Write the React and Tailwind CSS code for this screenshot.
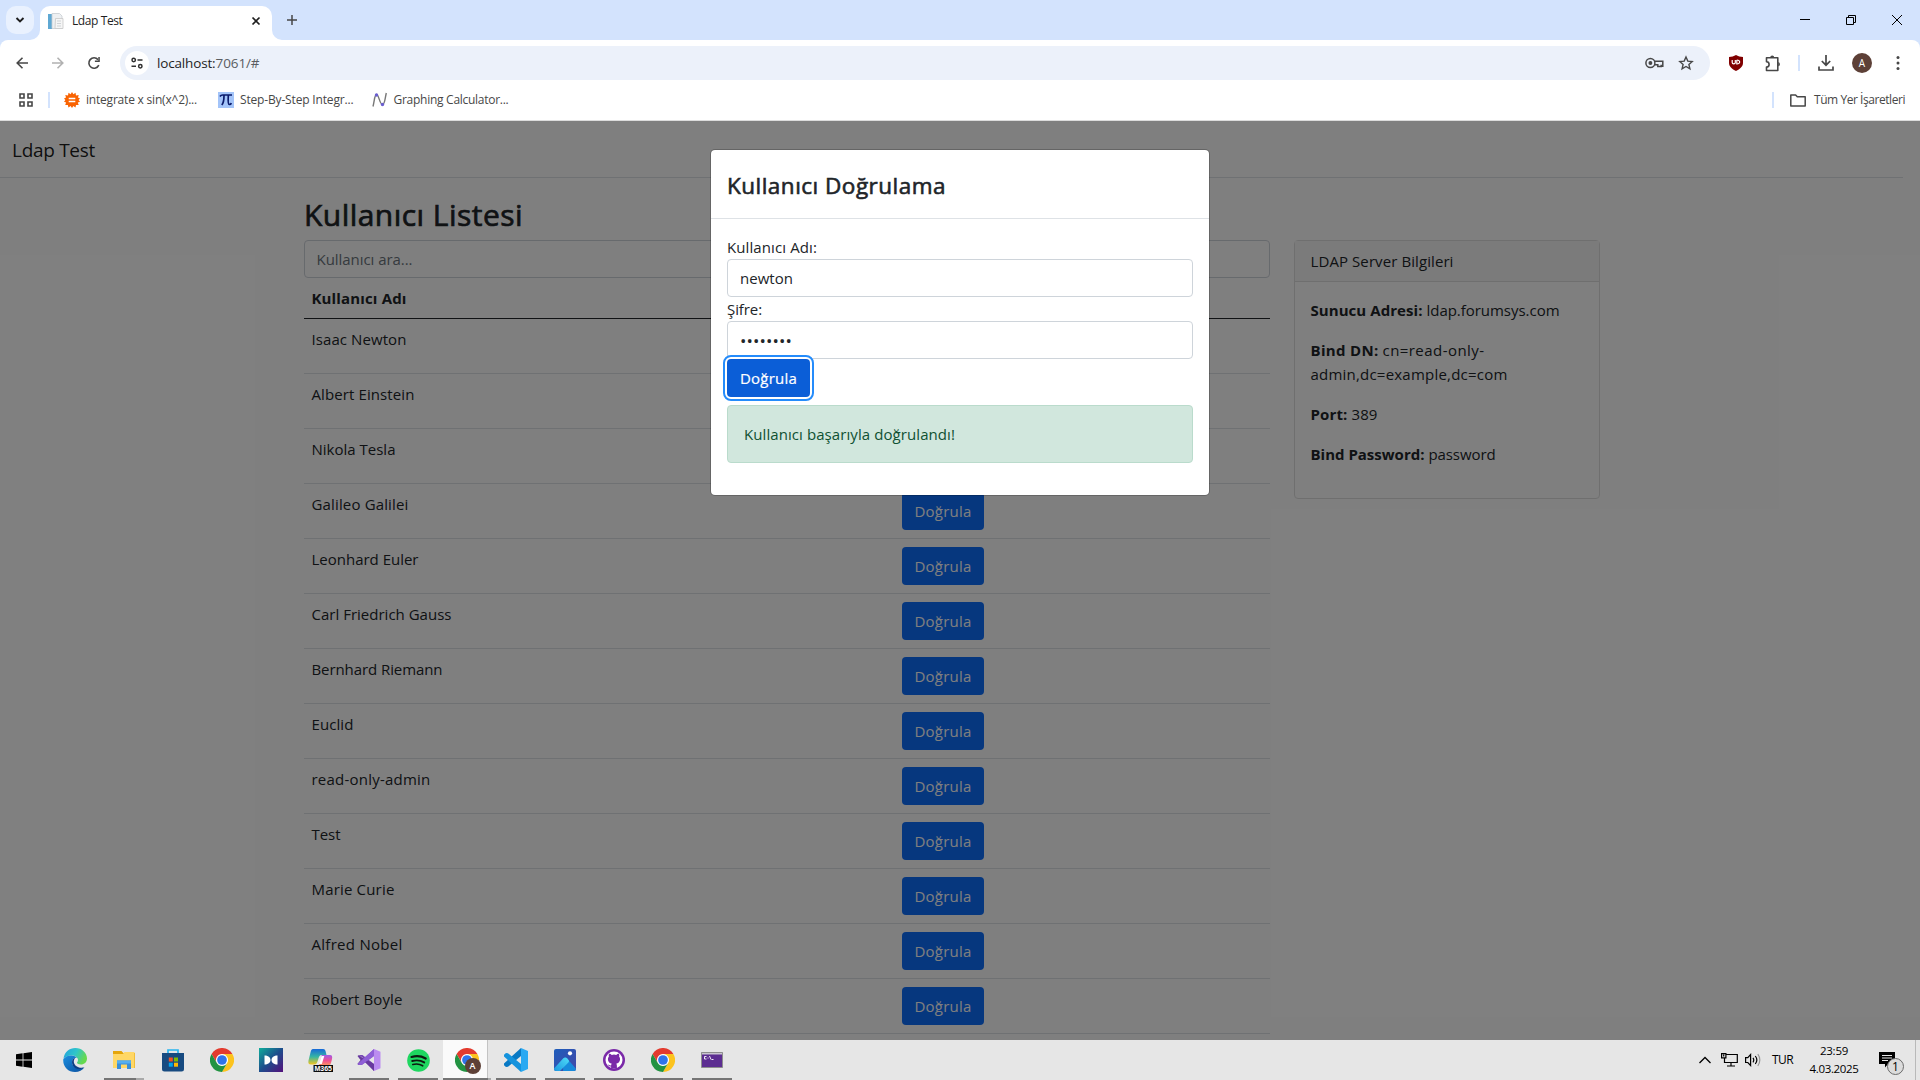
import { useLayoutEffect, useRef, useState } from "react";

/* Text whose tracking is adjusted so that it spans `w` pixels. */
function Fit({ w, className = "", children }) {
  const ref = useRef(null);
  const [spacing, setSpacing] = useState(0);
  useLayoutEffect(() => {
    const natural = ref.current.getBoundingClientRect().width;
    setSpacing((w - natural) / Array.from(String(children)).length);
  }, [w, children]);
  return (
    <span ref={ref} className={`inline-block whitespace-nowrap ${className}`} style={{ letterSpacing: `${spacing}px` }}>
      {children}
    </span>
  );
}

const USERS = [
  ["Isaac Newton", 95],
  ["Albert Einstein", 103],
  ["Nikola Tesla", 84],
  ["Galileo Galilei", 97],
  ["Leonhard Euler", 107],
  ["Carl Friedrich Gauss", 140],
  ["Bernhard Riemann", 131],
  ["Euclid", 42],
  ["read-only-admin", 119],
  ["Test", 29],
  ["Marie Curie", 83],
  ["Alfred Nobel", 91],
  ["Robert Boyle", 91],
];

function TabStrip() {
  return (
    <div className="flex h-10 items-end bg-[#d3e3fd] *:shrink-0">
      <div className="mb-[6px] ml-[6px] flex h-7 w-7 items-center justify-center rounded-[10px] bg-[#e9f1fe]">
        <svg width="10" height="8" viewBox="0 0 10 8" fill="none" stroke="#1f1f1f" strokeWidth="1.9"><path d="M1.5 2 5 5.5 8.5 2" /></svg>
      </div>
      <svg className="ml-[-4px]" width="10" height="10" viewBox="0 0 10 10"><path d="M10 0v10H0A10 10 0 0 0 10 0" fill="#fff" /></svg>
      <div className="flex h-[34px] w-[232px] items-center rounded-t-[10px] bg-white pr-[11px] pb-[5px] pl-2 text-[12px] text-[#1f1f1f]">
        <svg width="16" height="16" viewBox="0 0 16 16">
          <path d="M0 1h4v15H0z" fill="#5fa8d3" />
          <path d="M4 .5h7.5L14 3v12.500H4z" fill="#eef0f2" stroke="#c8cdd2" strokeWidth=".8" />
          <path d="M7.500 5.500h7.500v10H7z" fill="#f6f6f6" stroke="#c8c8c8" strokeWidth=".8" />
          <path d="M9 8h4M9 10.500h4M9 13h4" stroke="#cfd3d6" />
        </svg>
        <Fit w={50.500} className="ml-2">Ldap Test</Fit>
        <svg className="ml-auto" width="10" height="10" viewBox="0 0 10 10" stroke="#1f1f1f" strokeWidth="1.700"><path d="m1.500 1.500 7 7m0-7-7 7" /></svg>
      </div>
      <svg width="10" height="10" viewBox="0 0 10 10"><path d="M0 0v10h10A10 10 0 0 1 0 0" fill="#fff" /></svg>
      <svg className="mb-[15px] ml-[5px]" width="10" height="10" viewBox="0 0 10 10" stroke="#474747" strokeWidth="1.500"><path d="M5 0v10M0 5h10" /></svg>
      <div className="mb-[14px] ml-auto flex items-center pr-[17px]">
        <svg width="10" height="12" viewBox="0 0 10 12" stroke="#000"><path d="M0 5.500h10" /></svg>
        <svg className="ml-9" width="10" height="12" viewBox="0 0 10 12" fill="none" stroke="#000"><path d="M.5 3.500h7v7h-7zM2.500 3.500v-2h7v7h-2" /></svg>
        <svg className="ml-[35px]" width="12" height="12" viewBox="0 0 12 12" stroke="#000"><path d="m1 1 10 10M11 1 1 11" /></svg>
      </div>
    </div>
  );
}

function Toolbar() {
  return (
    <div className="bg-[#d3e3fd]">
      <div className="flex h-10 items-center rounded-t-[8px] bg-white pt-[6px] pr-4 pl-4 text-[#474747] *:shrink-0">
        <svg width="12" height="12" viewBox="0 0 12 12" fill="none" stroke="#474747" strokeWidth="1.600"><path d="M12 6H1.200M6.500.7 1.200 6l5.300 5.300" /></svg>
        <svg className="ml-6" width="12" height="12" viewBox="0 0 12 12" fill="none" stroke="#b1b1b1" strokeWidth="1.600"><path d="M0 6h10.800M5.500.7 10.800 6l-5.300 5.300" /></svg>
        <svg className="ml-[23px]" width="14" height="14" viewBox="0 0 14 14"><path d="M11.800 9.200A5.200 5.200 0 1 1 11 3.600" fill="none" stroke="#474747" strokeWidth="1.600" /><path d="M12.800 1v4.900H7.900V4.500h3.400V1z" fill="#474747" /></svg>
        <div className="ml-[19px] flex h-[34px] w-[1590px] items-center rounded-full bg-[#ecf1fa] pr-4 pl-[5px]">
          <div className="flex size-6 items-center justify-center rounded-full bg-white">
            <svg width="12" height="12" viewBox="0 0 12 12" fill="none" stroke="#303030" strokeWidth="1.500"><circle cx="2.700" cy="3" r="1.700" /><path d="M6.500 3h5M.5 9.300h4.500" /><circle cx="9.300" cy="9.300" r="1.700" /></svg>
          </div>
          <div className="ml-2 text-[13.500px] leading-5 text-[#1f1f1f]">
            <Fit w={58.500}>localhost:</Fit><Fit w={44} className="text-[#5a5d61]">7061/#</Fit>
          </div>
          <svg className="mr-[-1px] ml-auto" width="19" height="12" viewBox="0 0 19 12" fill="none" stroke="#474747" strokeWidth="1.500"><path d="M9.600 4.200h8.200v5h-1.600M9.600 7.700h3.200v1.800h3.400V7.700" /><circle cx="5.400" cy="6" r="4.500" /><circle cx="5.400" cy="6" r="1.200" fill="#474747" /></svg>
          <svg className="ml-[15px]" width="16" height="16" viewBox="0 0 16 16" fill="none" stroke="#474747" strokeWidth="1.400"><path d="m8 2 1.800 4.100 4.400.4-3.300 3 1 4.300L8 11.500l-3.900 2.300 1-4.300-3.300-3 4.400-.4z" /></svg>
        </div>
        <svg className="ml-[19px]" width="14" height="16" viewBox="0 0 14 16"><path d="M7 0c2 1.300 4.500 2 7 2v6c0 3.500-3 6-7 8-4-2-7-4.500-7-8V2c2.500 0 5-.7 7-2" fill="#800000" /><path d="M3.200 5v2.600c0 1.800 3.100 1.800 3.100 0V5M7.800 5v3.900c3.800.2 3.800-4 0-3.900" fill="none" stroke="#fff" strokeWidth="1.200" /></svg>
        <svg className="ml-[21px]" width="18" height="17" viewBox="0 0 18 17"><path d="M2.500 2.800h11.300v12.700H2.500V12a2.600 2.600 0 0 0 0-5.200z" fill="none" stroke="#474747" strokeWidth="1.600" strokeLinejoin="round" /><path d="M6.200 2.500a2 2 0 0 1 4 0zM14.200 7a2.200 2.200 0 0 1 0 4.300z" fill="#474747" /></svg>
        <span className="ml-4 h-4 w-[2px] bg-[#d3e3fd]" />
        <svg className="ml-[18px]" width="16" height="16" viewBox="0 0 16 16" fill="none" stroke="#474747" strokeWidth="1.700"><path d="M8 0v10M3.800 6 8 10.200 12.200 6M1 11.500V15h14v-3.500" /></svg>
        <span className="ml-[18px] flex size-5 items-center justify-center rounded-full bg-[#5d4037] text-[10px] leading-none text-white">A</span>
        <svg className="ml-6" width="4" height="16" viewBox="0 0 4 16" fill="#474747"><circle cx="2" cy="2.500" r="1.500" /><circle cx="2" cy="8" r="1.500" /><circle cx="2" cy="13.500" r="1.500" /></svg>
      </div>
    </div>
  );
}

function Bookmarks() {
  return (
    <div className="flex h-[41px] items-center border-b border-[#dcdcdc] bg-white pr-[15px] pl-[19px] text-[12px] text-[#474747]">
      <svg width="14" height="14" viewBox="0 0 14 14" fill="none" stroke="#474747" strokeWidth="1.600"><path d="M1 1h4v4H1zM9 1h4v4H9zM1 9h4v4H1zM9 9h4v4H9z" /></svg>
      <span className="ml-[15px] h-4 w-[2px] bg-[#d3e3fd]" />
      <svg className="ml-[14px]" width="16" height="16" viewBox="0 0 16 16">
        <path d="m8 0 1.400 2.200L11.500.8l.5 2.600 2.700-.3-.7 2.500 2 .9L14.500 8l1.500 1.700-2.200.9.900 2.500-2.700-.2-.5 2.500-2.200-1.500L8 16l-1.400-2.100-2.200 1.500-.5-2.500-2.700.2.900-2.500L0 9.700 1.400 8 0 6.500l2-.9-.7-2.500 2.700.3.500-2.600 2.100 1.400z" fill="#f96302" />
        <path d="M4.700 6.500h6.600M4.700 9.400h6.600" stroke="#fff" strokeWidth="1.500" />
      </svg>
      <Fit w={111} className="ml-[6px]">integrate x sin(x^2)...</Fit>
      <svg className="ml-[21px]" width="16" height="16" viewBox="0 0 16 16"><path d="M0 0h16v16H0z" fill="#a3c4f9" /><path d="M2 4.500C3 2.800 4 3 5 3h9M6 3.500C6 8 5.500 11 3.800 13M10.300 3.500c-.3 5-.5 8.800 1 9 1 .1 1.700-.6 1.900-1.500" fill="none" stroke="#0a1a6b" strokeWidth="1.700" /></svg>
      <Fit w={113.500} className="ml-[6px]">Step-By-Step Integr...</Fit>
      <svg className="ml-[18px]" width="16" height="16" viewBox="0 0 16 16" fill="none"><path d="M1 14.500C2.500 9 2.500 2.500 4.500 2.500c2.500 0 3 10 6 10C13 12.500 13 6 14.300 1" stroke="#777" strokeWidth="1.400" /><circle cx="4.500" cy="3" r="1.700" fill="#6a5ed0" /><circle cx="10.500" cy="12.500" r="1.700" fill="#6a5ed0" /></svg>
      <Fit w={115} className="ml-[6px]">Graphing Calculator...</Fit>
      <span className="ml-auto h-4 w-[2px] bg-[#d3e3fd]" />
      <svg className="ml-4" width="16" height="13" viewBox="0 0 16 13" fill="none" stroke="#474747" strokeWidth="1.500"><path d="M.8.900h4.800l1.700 1.900h7.900v9.300H.8z" strokeLinejoin="round" /></svg>
      <Fit w={91} className="ml-2">Tüm Yer İşaretleri</Fit>
    </div>
  );
}

function Info({ label, lw, value, vw }) {
  return (
    <p className="flex">
      <Fit w={lw} className="font-bold">{label}</Fit>
      <Fit w={vw} className="ml-1">{value}</Fit>
    </p>
  );
}

function Page() {
  return (
    <div className="h-full bg-white text-[15px] leading-6 text-[#212529]">
      <nav className="mr-[17px] flex h-[57px] items-center border-b border-[#dee2e6] pt-px pl-3">
        <Fit w={83} className="text-[19px] text-black/90">Ldap Test</Fit>
      </nav>
      <div className="flex px-[304px] pt-4">
        <main className="w-[966px]">
          <h2 className="mb-2 h-[38px] pt-[2px] text-[30px] leading-[38px] [-webkit-text-stroke:0.7px]"><Fit w={219}>Kullanıcı Listesi</Fit></h2>
          <div className="h-[38px] rounded border border-[#ced4da] px-[11.500px] py-[6px] text-[#6c757d]"><Fit w={96}>Kullanıcı ara...</Fit></div>
          <div className="h-[41px] border-b border-[#212529] px-[7.500px] py-2 font-bold"><Fit w={95}>Kullanıcı Adı</Fit></div>
          {USERS.map(([name, w]) => (
            <div key={name} className="grid h-[55px] grid-cols-[590px_1fr] border-b border-[#dee2e6] pt-2">
              <div className="pl-[7.500px]"><Fit w={w}>{name}</Fit></div>
              <div className="pl-2">
                <button className="block h-[38px] w-[82px] rounded bg-[#0d6efd] text-white"><Fit w={57}>Doğrula</Fit></button>
              </div>
            </div>
          ))}
        </main>
        <aside className="mt-[46px] ml-6 h-[259px] w-[306px] shrink-0 rounded border border-[#dfdfdf]">
          <div className="h-[41px] border-b border-[#dfdfdf] bg-[#f7f7f7] px-[15.500px] py-2"><Fit w={143}>LDAP Server Bilgileri</Fit></div>
          <div className="flex flex-col gap-4 px-[15.500px] py-4">
            <Info label="Sunucu Adresi:" lw={112} value="ldap.forumsys.com" vw={133} />
            <div>
              <Info label="Bind DN:" lw={68} value="cn=read-only-" vw={102} />
              <Fit w={197}>admin,dc=example,dc=com</Fit>
            </div>
            <Info label="Port:" lw={37} value="389" vw={26} />
            <Info label="Bind Password:" lw={114} value="password" vw={67} />
          </div>
        </aside>
      </div>
    </div>
  );
}

function Modal() {
  return (
    <div className="h-[347px] w-[500px] rounded-[5px] border border-black/20 bg-white bg-clip-padding text-[15px] leading-6 text-[#212529]">
      <div className="h-[69px] border-b border-[#dee2e6] px-4 pt-[18px] text-[22.500px] leading-9 [-webkit-text-stroke:0.600px]"><Fit w={219}>Kullanıcı Doğrulama</Fit></div>
      <div className="p-4">
        <div className="h-6"><Fit w={90}>Kullanıcı Adı:</Fit></div>
        <div className="h-[38px] rounded border border-[#ced4da] px-3 py-[6px]"><Fit w={53}>newton</Fit></div>
        <div className="h-6"><Fit w={35}>Şifre:</Fit></div>
        <div className="h-[38px] rounded border border-[#ced4da] px-3 py-[7px] text-[17px]"><Fit w={52}>••••••••</Fit></div>
        <button className="block h-[38px] w-[83px] rounded bg-[#0b5ed7] text-white outline-2 outline-offset-2 outline-[#258cfb] ring-2 ring-white [-webkit-text-stroke:0.200px]"><Fit w={57}>Doğrula</Fit></button>
        <div className="mt-2 h-[58px] rounded border border-[#badbcc] bg-[#d1e7dd] px-4 py-4 text-[#0f5132]"><Fit w={211}>Kullanıcı başarıyla doğrulandı!</Fit></div>
      </div>
    </div>
  );
}

function ChromeIcon() {
  return (
    <svg width="24" height="24" viewBox="0 0 48 48">
      <circle cx="24" cy="24" r="13" fill="#fff" />
      <path d="M3.200 12A24 24 0 0 1 44.800 12H24A12 12 0 0 0 13.600 30z" fill="#e33b2e" />
      <path d="M44.800 12A24 24 0 0 1 24 48L34.400 30A12 12 0 0 0 24 12z" fill="#fcc31e" />
      <path d="M24 48A24 24 0 0 1 3.200 12L13.600 30A12 12 0 0 0 34.400 30z" fill="#229342" />
      <circle cx="24" cy="24" r="9.700" fill="#2f74ea" />
    </svg>
  );
}

function EdgeIcon() {
  return (
    <svg width="24" height="24" viewBox="0 0 24 24">
      <defs>
        <linearGradient id="edgeTop" x1="0" y1="0" x2="1" y2=".4"><stop stopColor="#1f9fe0" /><stop offset=".55" stopColor="#2fc6c9" /><stop offset="1" stopColor="#66d94f" /></linearGradient>
        <linearGradient id="edgeLow" x1="0" y1="0" x2="1" y2="1"><stop stopColor="#1b8fe0" /><stop offset="1" stopColor="#0b4f9e" /></linearGradient>
      </defs>
      <path d="M.5 10.500C1.500 4 6.500 0 12.300 0 19 0 24 5 24 10.500c0 3.700-2.800 6-6 6-2.600 0-4-.9-4-1.700 0-.7 1-1 1-3C15 9.500 12 7.500 8.500 7.500 5 7.500 2 9 .5 10.500" fill="url(#edgeTop)" />
      <path d="M.3 11C2.500 8.500 5 7.500 8.500 7.500c2.500 0 4.500 1 5.500 2.300-3-.5-5 1.700-5 4.200 0 3.800 3.500 6.600 7.500 6.600 2.200 0 4-.8 5-1.300C19.500 22.300 16 24 12 24 5 24-.5 18.300.3 11" fill="url(#edgeLow)" />
      <path d="M9 14c0-2.200 1.300-3.800 3.300-4.200C10 12 9.800 17.500 16 19.500c2 .6 4.300 0 5.500-.2-1 .8-3 1.800-5.500 1.800-4 0-7-3.200-7-7.100" fill="#0d3f86" />
    </svg>
  );
}

const ICONS = {
  edge: <EdgeIcon />,
  explorer: (
    <svg width="22" height="20" viewBox="0 0 22 20"><path d="M0 1h8.500l1.800 2H22v15H0z" fill="#e5a50b" /><path d="M0 4h10l1.500-2H21.500v16H0z" fill="#ffd766" /><path d="M4 19v-8.500h14V19h-4v-4.500H8V19z" fill="#3a8fd9" /><path d="M4 10.500h14v3H4z" fill="#55aef0" /></svg>
  ),
  store: (
    <svg width="24" height="24" viewBox="0 0 24 24"><path d="M7 6V2h10v4" fill="none" stroke="#29b5f0" strokeWidth="1.700" /><path d="M1 5h22v16a2.500 2.500 0 0 1-2.500 2.500h-17A2.500 2.500 0 0 1 1 21z" fill="#174a80" /><path d="M7.800 9.500h4v4h-4z" fill="#f25022" /><path d="M13 9.500h4v4h-4z" fill="#7fba00" /><path d="M7.800 14.700h4v4h-4z" fill="#00a4ef" /><path d="M13 14.700h4v4h-4z" fill="#ffb900" /></svg>
  ),
  chrome: <ChromeIcon />,
  bow: (
    <svg width="24" height="24" viewBox="0 0 24 24"><defs><linearGradient id="bow" x1="0" y1="0" x2="1" y2="1"><stop stopColor="#0fae9b" /><stop offset=".5" stopColor="#1d4d8c" /><stop offset="1" stopColor="#55107c" /></linearGradient></defs><path d="M0 0h24v24H0z" fill="url(#bow)" /><path d="M5.500 7.500C10 7.500 11.500 10 11.500 12S10 16.500 5.500 16.500zM18.500 7.500C14 7.500 12.500 10 12.500 12s1.500 4.500 6 4.500z" fill="#fff" /></svg>
  ),
  m365: (
    <svg width="25" height="24" viewBox="0 0 25 24">
      <defs><linearGradient id="mA" x1="0" y1="0" x2="0" y2="1"><stop stopColor="#1668d8" /><stop offset=".5" stopColor="#35b6a4" /><stop offset="1" stopColor="#f4c51c" /></linearGradient><linearGradient id="mB" x1="0" y1="0" x2="0" y2="1"><stop stopColor="#a05be8" /><stop offset=".5" stopColor="#ee4f91" /><stop offset="1" stopColor="#ff9a5a" /></linearGradient></defs>
      <path d="M5 1h10c2 0 2.500 1.500 3 4l.5 2h-5c-2 0-2.500 1.500-3.500 5-1 3-1.500 4.500-4 4.500H3c-2.500 0-3-1.500-2.500-4l2-8C3 2.500 3.500 1 5 1" fill="url(#mA)" />
      <path d="M14 7h8c2 0 2.600 1.500 2 4l-1 4c-.6 2-1.500 3-3.500 3H9c2 0 2.500-2 3-4l1-4c.4-2 .6-3 1-3" fill="url(#mB)" />
      <path d="M13.500 8h2.800l-2.500 8H11z" fill="#fff" />
      <path d="M5.500 17H25v7H5.500z" fill="#0b0b0b" />
      <text x="6.500" y="23" fontSize="7" fontWeight="700" fill="#fff" textLength="17.500" fontFamily="Liberation Sans, sans-serif">M365</text>
    </svg>
  ),
  vs: (
    <svg width="24" height="24" viewBox="0 0 24 24"><path d="m17 1 6.500 2.800v16.400L17 23z" fill="#bb8cf0" /><path d="M.5 8 2 7l3.500 2.500L17 23V16L5.500 7 2 7z" fill="#7544b5" /><path d="M17 1v7L5 17l-3 0-1.500-1z" fill="#8a5bd0" /><path d="M.5 8 2 7l3 2.500L17 16v7L7.500 13.800 2 17l-1.500-1 3-4z" fill="#68399f" /><path d="M17 1v7L5.500 16.200 2 17 .5 16z" fill="#8f5fd6" /><path d="M.500 9.500v5L3.200 12z" fill="#e6e6e6" /></svg>
  ),
  spotify: (
    <svg width="23" height="23" viewBox="0 0 23 23" fill="none" stroke="#0c1a10" strokeLinecap="round"><circle cx="11.500" cy="11.500" r="11.300" fill="#1ed760" stroke="none" /><path d="M4.500 8c5-1.400 10-.9 14.200 1.500" strokeWidth="2.200" /><path d="M5.200 12c4.300-1.200 8.500-.7 12 1.400" strokeWidth="1.900" /><path d="M5.800 15.500c3.500-.9 7-.5 9.900 1.300" strokeWidth="1.600" /></svg>
  ),
  chromeA: (
    <div className="relative ml-[3px]">
      <ChromeIcon />
      <span className="absolute top-[10px] left-[10px] flex size-4 items-center justify-center rounded-full bg-[#5d4037] text-[9px] font-semibold text-white">A</span>
    </div>
  ),
  vscode: (
    <svg width="24" height="24" viewBox="0 0 24 24"><path d="M17 0 0 15.500v1.800L2 19l2-.3L17 8z" fill="#0879c4" /><path d="M17 24 0 8.500V6.700L2 5l2 .3L17 16z" fill="#1593dd" /><path d="m17 0 7 3v18l-7 3z" fill="#2aa9f2" /></svg>
  ),
  photos: (
    <svg width="22" height="22" viewBox="0 0 22 22">
      <defs>
        <linearGradient id="ph" x1="0" y1="0" x2="1" y2="1"><stop stopColor="#1e5dbb" /><stop offset="1" stopColor="#4348a8" /></linearGradient>
        <linearGradient id="ph2" x1="0" y1="1" x2="1" y2="0"><stop stopColor="#1a95e0" /><stop offset="1" stopColor="#4fdcf7" /></linearGradient>
        <clipPath id="phc"><rect width="22" height="22" rx="2" /></clipPath>
      </defs>
      <g clipPath="url(#phc)">
        <path d="M0 0h22v22H0z" fill="url(#ph)" />
        <path d="M9.500 9.500c1-1.200 2.500-1.200 3.600 0L24 22H9z" fill="#178adb" />
        <path d="M-1 20.500 9.300 9.300c1-1.100 2.600-1.200 3.600-.2l1.500 1.600c.8.900.8 1.900 0 2.700L6 22h-7z" fill="url(#ph2)" />
        <circle cx="16" cy="4.300" r="2.100" fill="#fff" />
      </g>
    </svg>
  ),
  github: (
    <svg width="22" height="22" viewBox="0 0 22 22"><circle cx="11" cy="11" r="11" fill="#7a29a8" /><circle cx="11" cy="11" r="8.500" fill="#fff" /><path d="M6 4.800c1.200 0 2 .5 2.800 1.100a9 9 0 0 1 4.400 0c.8-.6 1.600-1.100 2.800-1.100.4 1 .4 2 .1 2.800 2 2.500.8 6.700-2.900 7.100.6.600.7 1.500.7 2.400V19a8.500 8.500 0 0 1-5.800 0v-1.500c-2 .4-2.600-1-3.400-1.900 1.200-.2 1.700 1.200 3.400.8 0-.7.200-1.300.7-1.700-3.700-.4-4.900-4.600-2.900-7.100C5.600 6.800 5.600 5.800 6 4.800" fill="#7a29a8" /></svg>
  ),
  terminal: (
    <svg className="mt-[-1px]" width="22" height="16" viewBox="0 0 22 16"><path d="M.5.500h21v15H.5z" fill="#5c2d91" stroke="#8d8d8d" /><path d="M1 1h20v1.500H1z" fill="#c9c4cf" /><path d="M5.500 4.500H3.500v2.500h2M7 5v.5M7 6.500V7M8.500 4l1.500 3.500M10.500 7.500h2" stroke="#fff" fill="none" strokeWidth=".9" /></svg>
  ),
};

const TASKS = [
  ["edge", 0], ["explorer", 2], ["store", 0], ["chrome", 0], ["bow", 0], ["m365", 0], ["vs", 1],
  ["spotify", 1], ["chromeA", 3], ["vscode", 1], ["photos", 1], ["github", 1], ["chrome", 1], ["terminal", 1],
];

function Task({ icon, state }) {
  return (
    <div className="flex h-10 w-[49px] flex-col">
      <div className={`flex h-[38px] items-center justify-center pt-[2px] ${state === 3 ? "mr-[3px] ml-px border-r border-[#c4c4c4] bg-[#fafafa]" : "pl-px"}`}>{ICONS[icon]}</div>
      {state === 1 && <div className="mr-1 ml-[5px] h-[2px] bg-[#757575]" />}
      {state === 2 && <div className="ml-[5px] flex h-[2px] w-10"><div className="w-8 bg-[#757575]" /><div className="w-2 bg-[#a9a9a9]" /></div>}
      {state === 3 && <div className="ml-px flex h-[2px] w-12"><div className="w-[45px] bg-[#757575]" /><div className="w-[3px] bg-[#a9a9a9]" /></div>}
    </div>
  );
}

function Taskbar() {
  return (
    <div className="flex h-10 items-center bg-[#e6e6e6] text-[12px] text-black">
      <div className="flex w-[50px] pl-4">
        <svg width="16" height="16" viewBox="0 0 16 16"><path d="M0 2.200 6.600 1.300v6.300H0zM7.400 1.200 16 0v7.600H7.400zM0 8.400h6.600v6.300L0 13.800zM7.400 8.400H16V16l-8.600-1.200z" /></svg>
      </div>
      {TASKS.map(([icon, state], i) => <Task key={i} icon={icon} state={state} />)}
      <svg className="ml-auto" width="12" height="8" viewBox="0 0 12 8" fill="none" stroke="#000" strokeWidth="1.300"><path d="m.5 7 5.500-5.500L11.500 7" /></svg>
      <svg className="ml-[10px]" width="17" height="14" viewBox="0 0 17 14" fill="none" stroke="#000" strokeWidth="1.200"><path d="M5.500 1.500h10.800v8H3.500V5.500M10 9.500v3M6 13h8M.6.600h4.300v4.300H.6zM2.700 1.500v2" /></svg>
      <svg className="ml-[7px]" width="17" height="14" viewBox="0 0 17 14" fill="none" stroke="#000" strokeWidth="1.200"><path d="M.6 4.600h2.200L5.600 1.500v11L2.800 9.500H.6zM8 4.800a4 4 0 0 1 0 4.500M10.300 3a6.500 6.500 0 0 1 0 8" /><path d="M12.800 1.200a9.500 9.500 0 0 1 0 11.700" stroke="#999" /></svg>
      <Fit w={21} className="ml-[10px]">TUR</Fit>
      <div className="ml-4 flex w-[50px] flex-col items-center text-[11.500px] leading-[18px]">
        <Fit w={28}>23:59</Fit>
        <Fit w={49}>4.03.2025</Fit>
      </div>
      <div className="relative ml-5 h-[26px] w-[25px]">
        <svg className="mt-[5px]" width="16" height="16" viewBox="0 0 16 16"><path d="M0 0h16v12H9l-3 3.500V12H0z" /><path d="M3 3.500h10M3 6h10M3 8.500h6" stroke="#e6e6e6" strokeWidth="1.200" /></svg>
        <span className="absolute top-[11px] left-[8px] flex size-[17px] items-center justify-center rounded-full border border-[#6b6b6b] bg-[#dcdcdc] text-[12px] leading-none">1</span>
      </div>
      <div className="ml-[11px] h-10 w-[5px] border-l border-[#b9b9b9]" />
    </div>
  );
}

export default function App() {
  return (
    <div className="flex h-[1080px] w-[1920px] flex-col overflow-hidden font-['Open_Sans','Noto_Sans',sans-serif]">
      <TabStrip />
      <Toolbar />
      <Bookmarks />
      <div className="relative h-[919px] overflow-hidden">
        <Page />
        <div className="absolute inset-0 flex items-start justify-center bg-black/50 pt-7">
          <Modal />
        </div>
      </div>
      <Taskbar />
    </div>
  );
}
